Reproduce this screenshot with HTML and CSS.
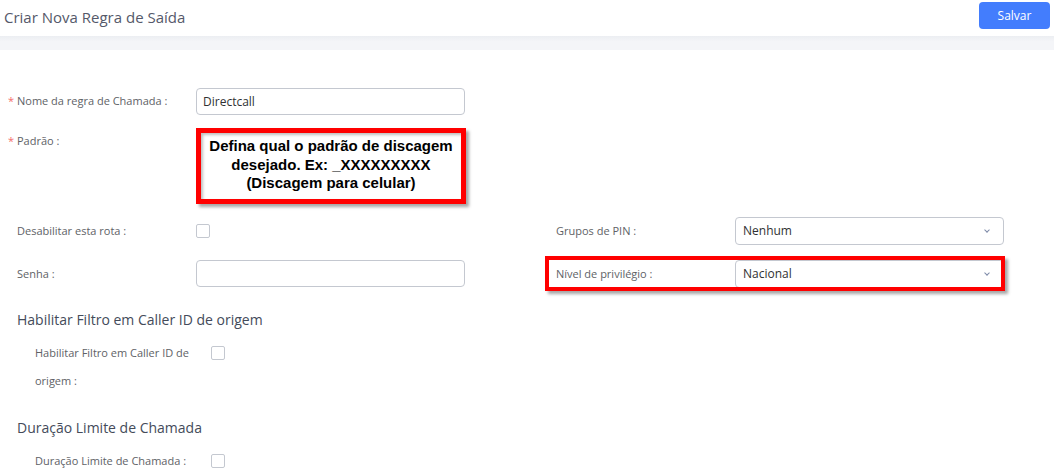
FILE: index.html
```html
<!DOCTYPE html>
<html lang="pt">
<head>
    <meta charset="utf-8">
    <link rel="stylesheet" href="styles.css">
</head>
<body>
<div class="header">
    <h1 class="title">Criar Nova Regra de Saída</h1>
    <button class="btn-save">Salvar</button>
</div>
<div class="band"></div>

<div class="form">
    <div class="row">
        <label class="label"><i class="req">*</i>Nome da regra de Chamada&nbsp;:</label>
        <div class="control"><input class="input" type="text" value="Directcall"></div>
    </div>

    <div class="row row-top">
        <label class="label"><i class="req">*</i>Padrão&nbsp;:</label>
        <div class="note">Defina qual o padrão de discagem desejado. Ex: _XXXXXXXXX (Discagem para celular)</div>
    </div>

    <div class="row row-pair">
        <div class="cell">
            <label class="label">Desabilitar esta rota&nbsp;:</label>
            <div class="control"><span class="check"></span></div>
        </div>
        <div class="cell cell-right">
            <label class="label">Grupos de PIN&nbsp;:</label>
            <div class="control"><div class="select">Nenhum<span class="arrow"></span></div></div>
        </div>
    </div>

    <div class="row row-pair">
        <div class="cell">
            <label class="label">Senha&nbsp;:</label>
            <div class="control"><input class="input" type="password"></div>
        </div>
        <div class="cell cell-right marked">
            <label class="label">Nível de privilégio&nbsp;:</label>
            <div class="control"><div class="select">Nacional<span class="arrow"></span></div></div>
        </div>
    </div>

    <h2 class="section">Habilitar Filtro em Caller ID de origem</h2>
    <div class="sub-row">
        <label class="sub-label">Habilitar Filtro em Caller ID de origem&nbsp;:</label>
        <span class="check"></span>
    </div>

    <h2 class="section section-2">Duração Limite de Chamada</h2>
    <div class="sub-row">
        <label class="sub-label">Duração Limite de Chamada&nbsp;:</label>
        <span class="check"></span>
    </div>
</div>
</body>
</html>
```

FILE: styles.css
```css
*, *::before, *::after {
    margin: 0;
    padding: 0;
    box-sizing: border-box;
}

body {
    font-family: "Open Sans", "Noto Sans", sans-serif;
    font-size: 11px;
    color: #606266;
    background-color: #fff;
    overflow: hidden;
}

.header {
    height: 36px;
    display: flex;
    align-items: center;
    justify-content: space-between;
    padding: 0 4px;
}

.title {
    font-size: 15px;
    font-weight: normal;
    color: #55596a;
    margin-top: -2px;
}

.btn-save {
    width: 71px;
    height: 27px;
    margin-top: -5px;
    border: none;
    border-radius: 4px;
    background-color: #437dfd;
    color: #fff;
    font-family: inherit;
    font-size: 12px;
}

.band {
    height: 14px;
    background: linear-gradient(#eceef2, #f4f5f8 40%, #f4f5f8);
}

.form {
    padding: 37px 0 0 8px;
}

.row {
    display: flex;
    align-items: center;
    margin-bottom: 13px;
}

.row-top {
    align-items: flex-start;
}

.row-pair {
    margin-bottom: 11px;
}

.cell {
    display: flex;
    align-items: center;
    flex: none;
    width: 537px;
    padding-left: 9px;
}

.cell-right {
    width: 460px;
    padding-left: 11px;
}

.label {
    flex: none;
    width: 188px;
    padding-left: 9px;
    line-height: 28px;
    white-space: nowrap;
}

.cell .label {
    width: 179px;
    padding-left: 0;
}

.row-top .label {
    line-height: 26px;
}

.req {
    display: inline-block;
    width: 9px;
    margin-left: -9px;
    font-style: normal;
    color: #f56c6c;
}

.input {
    display: block;
    width: 269px;
    height: 27px;
    padding: 0 6px;
    border: 1px solid #c4c8d0;
    border-radius: 4px;
    font-family: inherit;
    font-size: 12px;
    color: #303133;
    outline: none;
}

.select {
    position: relative;
    width: 269px;
    height: 28px;
    padding: 0 7px;
    line-height: 26px;
    border: 1px solid #c4c8d0;
    border-radius: 4px;
    font-size: 12px;
    color: #303133;
}

.arrow {
    position: absolute;
    right: 14px;
    top: 10px;
    width: 4px;
    height: 4px;
    border-right: 1px solid #7d8aa8;
    border-bottom: 1px solid #7d8aa8;
    transform: rotate(45deg);
}

.check {
    display: block;
    width: 14px;
    height: 14px;
    border: 1px solid #c4c8d0;
    border-radius: 2px;
    background-color: #fff;
}

.note {
    width: 270px;
    height: 76px;
    border: 5px solid #ff0000;
    box-shadow: 3px 3px 3px rgba(0, 0, 0, .35), inset 2px 2px 3px rgba(0, 0, 0, .25);
    padding-top: 4px;
    font: bold 15px/18.5px "Liberation Sans", Arial, sans-serif;
    color: #000;
    text-align: center;
}

.marked {
    position: relative;
    height: 35px;
}

.marked::after {
    content: "";
    position: absolute;
    left: 0;
    top: 0;
    width: 460px;
    height: 35px;
    border: 4px solid #ff0000;
    box-shadow: 3px 3px 3px rgba(0, 0, 0, .35);
}

.section {
    font-size: 14px;
    font-weight: normal;
    color: #444b5a;
    margin: 19px 0 0 9px;
    line-height: 20px;
}

.section-2 {
    margin-top: 23px;
}

.sub-row {
    display: flex;
    align-items: flex-start;
    padding-left: 27px;
    margin-top: 9px;
}

.sub-label {
    width: 176px;
    line-height: 28px;
}

.sub-row .check {
    margin-top: 7px;
}
```
